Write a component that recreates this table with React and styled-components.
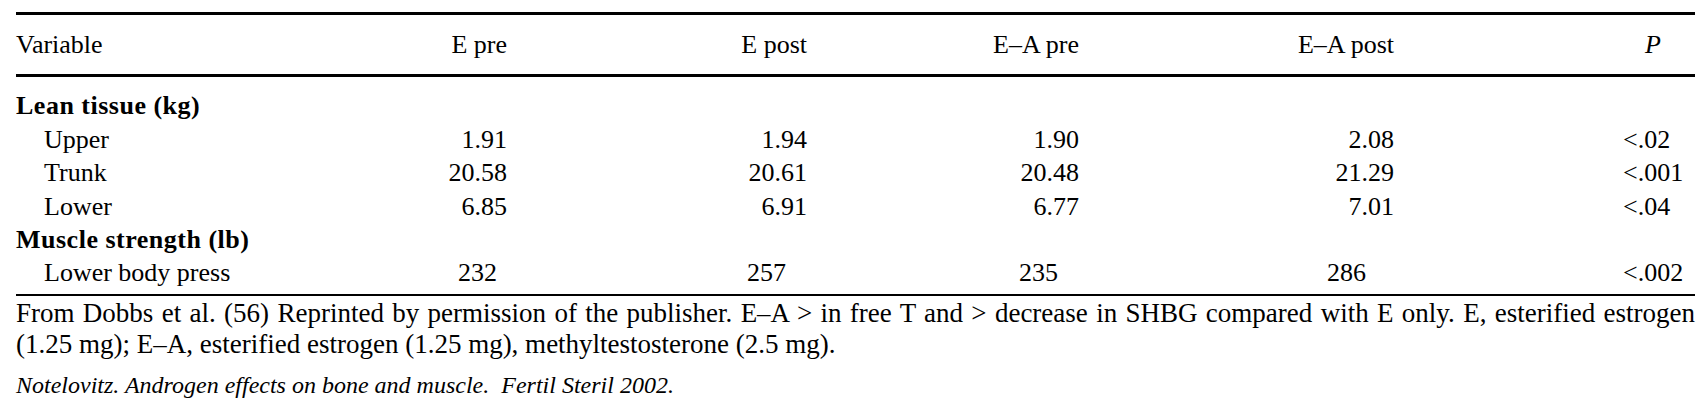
import React from 'react';
import styled, { createGlobalStyle } from 'styled-components';

const GlobalStyle = createGlobalStyle`
  body {
    margin: 0;
    background: #fff;
  }
`;

const Page = styled.div`
  width: 1708px;
  height: 407px;
  box-sizing: border-box;
  padding: 12px 13px 0 16px;
  font-family: 'Liberation Serif', 'Times New Roman', serif;
  color: #000;
`;

const Table = styled.div`
  border-top: 3px solid #000;
  border-bottom: 2px solid #000;
`;

const Head = styled.div`
  padding: 12.5px 0 13px;
  border-bottom: 3px solid #000;
`;

const Body = styled.div`
  padding: 12.5px 0 4px;
`;

const Row = styled.div`
  display: grid;
  grid-template-columns: 340px 151px 300px 272px 315px 1fr 72px;
  font-size: 26px;
  line-height: 33.4px;
`;

const Label = styled.div`
  padding-left: ${(p) => (p.$indent ? '28px' : '0')};
  font-weight: ${(p) => (p.$group ? 700 : 400)};
  letter-spacing: ${(p) => (p.$group ? '0.5px' : '0')};
  white-space: nowrap;
`;

const Num = styled.div`
  text-align: right;
  padding-right: ${(p) => p.$pad || 0}px;
  white-space: nowrap;
`;

const PCell = styled.div`
  grid-column: 7;
  padding-left: ${(p) => (p.$head ? '22px' : '0')};
  font-style: ${(p) => (p.$head ? 'italic' : 'normal')};
  white-space: nowrap;
`;

const Note = styled.div`
  padding-top: 2.5px;
  font-size: 27px;
  line-height: 31px;
`;

const Justified = styled.div`
  text-align: justify;
  text-align-last: justify;
`;

const Source = styled.div`
  margin-top: 9.5px;
  font-size: 24px;
  line-height: 30px;
  font-style: italic;
`;

const groups = [
  {
    title: 'Lean tissue (kg)',
    rows: [
      { name: 'Upper', vals: ['1.91', '1.94', '1.90', '2.08'], p: '<.02' },
      { name: 'Trunk', vals: ['20.58', '20.61', '20.48', '21.29'], p: '<.001' },
      { name: 'Lower', vals: ['6.85', '6.91', '6.77', '7.01'], p: '<.04' },
    ],
  },
  {
    title: 'Muscle strength (lb)',
    rows: [
      { name: 'Lower body press', vals: ['232', '257', '235', '286'], p: '<.002', whole: true },
    ],
  },
];

// whole numbers sit a little left of the decimal column edge
const intPad = [10, 21, 21, 28];

export default function App() {
  return (
    <Page>
      <GlobalStyle />
      <Table>
        <Head>
          <Row>
            <Label>Variable</Label>
            <Num $pad={-6}>E pre</Num>
            <Num $pad={-1}>E post</Num>
            <Num $pad={-1}>E–A pre</Num>
            <Num $pad={-13}>E–A post</Num>
            <PCell $head>P</PCell>
          </Row>
        </Head>
        <Body>
          {groups.map((g) => (
            <React.Fragment key={g.title}>
              <Row>
                <Label $group>{g.title}</Label>
              </Row>
              {g.rows.map((r) => (
                <Row key={r.name}>
                  <Label $indent>{r.name}</Label>
                  {r.vals.map((v, i) => (
                    <Num key={i} $pad={r.whole ? intPad[i] : 0}>{v}</Num>
                  ))}
                  <PCell>{r.p}</PCell>
                </Row>
              ))}
            </React.Fragment>
          ))}
        </Body>
      </Table>
      <Note>
        <Justified>
          From Dobbs et al. (56) Reprinted by permission of the publisher. E–A &gt; in free T and &gt; decrease in SHBG compared with E only. E, esterified estrogen
        </Justified>
        <div>(1.25 mg); E–A, esterified estrogen (1.25 mg), methyltestosterone (2.5 mg).</div>
      </Note>
      <Source>Notelovitz. Androgen effects on bone and muscle.&nbsp; Fertil Steril 2002.</Source>
    </Page>
  );
}
